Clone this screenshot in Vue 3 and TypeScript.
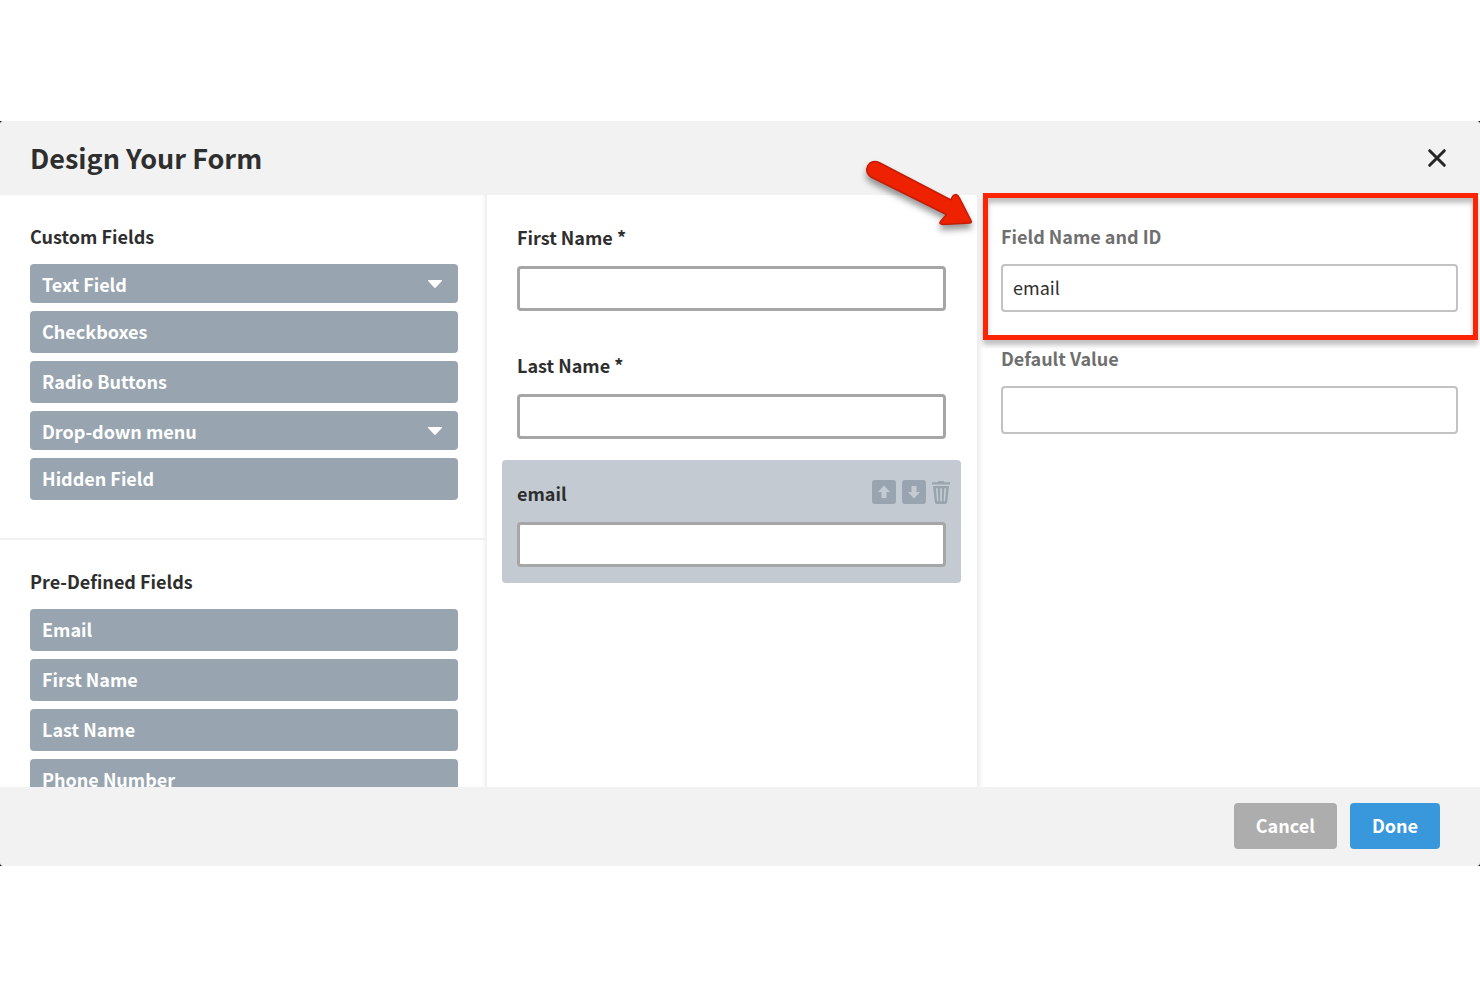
<script setup lang="ts">
import { ref } from 'vue'

interface PaletteField {
  label: string
  menu?: boolean
}

interface FormField {
  id: string
  label: string
  selected?: boolean
}

const customFields: PaletteField[] = [
  { label: 'Text Field', menu: true },
  { label: 'Checkboxes' },
  { label: 'Radio Buttons' },
  { label: 'Drop-down menu', menu: true },
  { label: 'Hidden Field' },
]

const predefinedFields: PaletteField[] = [
  { label: 'Email' },
  { label: 'First Name' },
  { label: 'Last Name' },
  { label: 'Phone Number' },
]

const formFields: FormField[] = [
  { id: 'first-name', label: 'First Name *' },
  { id: 'last-name', label: 'Last Name *' },
  { id: 'email', label: 'email', selected: true },
]

const fieldName = ref('email')
const defaultValue = ref('')
</script>

<template>
  <main class="page">
    <section class="dialog" role="dialog" aria-labelledby="dialog-title">
      <header class="dialog-header">
        <h1 id="dialog-title">Design Your Form</h1>
        <button type="button" class="close" aria-label="Close">
          <svg viewBox="0 0 20 20" width="20" height="20">
            <path d="M2.700 2.700 17.300 17.300M17.300 2.700 2.700 17.300" fill="none" stroke="#262626" stroke-width="3" stroke-linecap="round" />
          </svg>
        </button>
      </header>

      <div class="dialog-body">
        <div class="palette">
          <section class="palette-group">
            <h2>Custom Fields</h2>
            <div class="palette-list">
              <button
                v-for="field in customFields"
                :key="field.label"
                type="button"
                class="palette-item"
                :class="{ 'has-menu': field.menu }"
              >
                <span>{{ field.label }}</span>
                <svg v-if="field.menu" viewBox="0 0 16 10" width="16" height="10">
                  <path d="M1.6 1h12.8c.7 0 .9.6.5 1L8.8 8.6c-.5.5-1.100.5-1.600 0L1.100 2c-.4-.4-.2-1 .5-1z" fill="#fff" />
                </svg>
              </button>
            </div>
          </section>
          <section class="palette-group">
            <h2>Pre-Defined Fields</h2>
            <div class="palette-list">
              <button v-for="field in predefinedFields" :key="field.label" type="button" class="palette-item">
                <span>{{ field.label }}</span>
              </button>
            </div>
          </section>
        </div>

        <div class="canvas">
          <div v-for="field in formFields" :key="field.id" class="form-field" :class="{ selected: field.selected }">
            <label :for="field.id">{{ field.label }}</label>
            <input :id="field.id" type="text" />
            <div v-if="field.selected" class="actions">
              <button type="button" aria-label="Move up">
                <svg viewBox="0 0 24 24" width="24" height="24">
                  <rect width="24" height="24" rx="3" fill="#98a5b0" />
                  <path d="M12 5.500 18 12h-3.500v6h-5v-6H6z" fill="#c3cad2" />
                </svg>
              </button>
              <button type="button" aria-label="Move down">
                <svg viewBox="0 0 24 24" width="24" height="24">
                  <rect width="24" height="24" rx="3" fill="#98a5b0" />
                  <path d="M12 18.500 18 12h-3.500V6h-5v6H6z" fill="#c3cad2" />
                </svg>
              </button>
              <button type="button" aria-label="Delete">
                <svg viewBox="0 0 18 24" width="18" height="24">
                  <path d="M0 2.200h5.500L6.500 1h5l1 1.200H18v2.300H0z" fill="#98a5b0" />
                  <path
                    fill-rule="evenodd"
                    d="M1 6h16l-1.800 16.200Q15 24 13.400 24H4.600Q3 24 2.800 22.200zM4 8.200l1 13h1.300l-.6-13zM8.100 8.200v13h1.800v-13zM12.300 8.200l-.6 13H13l1-13z"
                    fill="#98a5b0"
                  />
                </svg>
              </button>
            </div>
          </div>
        </div>

        <div class="settings">
          <div class="setting">
            <label for="field-name">Field Name and ID</label>
            <input id="field-name" v-model="fieldName" type="text" />
            <div class="highlight"></div>
            <svg class="arrow" viewBox="860 154 124 84" width="124" height="84" aria-hidden="true">
              <path
                d="M879 162.500 951 200Q952.500 194.500 956 194.500 958 195 959.500 198L971 220.500Q972 222.800 970 223L943 224.400Q938.500 224.300 940.500 221.500L946.500 214.500 871 177A8 8 0 0 1 879 162.500z"
                fill="#ee2200"
                stroke="#c41c06"
                stroke-width="1.500"
                stroke-linejoin="round"
              />
            </svg>
          </div>
          <div class="setting">
            <label for="default-value">Default Value</label>
            <input id="default-value" v-model="defaultValue" type="text" />
          </div>
        </div>
      </div>

      <footer class="dialog-footer">
        <button type="button" class="cancel">Cancel</button>
        <button type="button" class="done">Done</button>
      </footer>
    </section>
  </main>
</template>

<style>
body {
  margin: 0;
  background: #fff;
}
</style>

<style scoped>
.page {
  box-sizing: border-box;
  height: 100vh;
  padding: 121px 0;
  display: flex;
  font-family: 'Noto Sans CJK SC', 'Noto Sans', sans-serif;
  font-size: 18px;
  line-height: 24px;
  color: #2e2e2e;
}

button,
input {
  box-sizing: border-box;
  font: inherit;
  color: inherit;
}

button {
  border: 0;
  padding: 0;
  background: none;
  cursor: pointer;
}

svg {
  display: block;
}

h1,
h2 {
  margin: 0;
  font-weight: 700;
}

.dialog {
  flex: 1;
  min-width: 0;
  display: flex;
  flex-direction: column;
  background: #000;
}

.dialog-header {
  display: flex;
  align-items: center;
  justify-content: space-between;
  height: 74px;
  padding: 0 33px 0 30px;
  box-sizing: border-box;
  background: #f2f2f2;
  border-radius: 3px 3px 0 0;
}

h1 {
  font-size: 27px;
  line-height: 36px;
}

.dialog-body {
  flex: 1;
  min-height: 0;
  display: grid;
  grid-template-columns: 487fr 490fr 503fr;
  grid-template-rows: minmax(0, 1fr);
  background: #fff;
}

.palette {
  overflow: hidden;
  box-shadow: inset -4px 0 4px -2px #ececec;
}

.palette-group {
  padding: 29px 29px 38px 30px;
}

.palette-group + .palette-group {
  border-top: 2px solid #f0f0f0;
}

h2 {
  margin-bottom: 16px;
  font-size: 18px;
  line-height: 24px;
}

.palette-list {
  display: flex;
  flex-direction: column;
  gap: 8px;
}

.palette-item {
  display: flex;
  align-items: center;
  justify-content: space-between;
  height: 42px;
  padding: 0 15px 2px 12px;
  border-radius: 4px;
  background: #98a5b0;
  color: #fff;
  font-weight: 700;
}

.palette-item.has-menu {
  height: 39px;
  padding-bottom: 0;
}

.canvas {
  display: flex;
  flex-direction: column;
  gap: 5px;
  padding: 9px 16px 9px 15px;
}

.form-field {
  position: relative;
  display: flex;
  flex-direction: column;
  gap: 17px;
  padding: 21px 15px 16px;
  border-radius: 4px;
  font-weight: 700;
}

.form-field.selected {
  background: #c3cad2;
}

.form-field input {
  width: 100%;
  height: 45px;
  padding: 0 12px;
  border: 3px solid #a6a6a6;
  border-radius: 4px;
  background: #fff;
  font-weight: 400;
}

.actions {
  position: absolute;
  top: 20px;
  right: 11px;
  display: flex;
  gap: 6px;
}

.settings {
  display: flex;
  flex-direction: column;
  gap: 34px;
  padding: 29px 22px 30px 24px;
  box-shadow: inset 7px 0 5px -4px #ececec;
}

.setting {
  position: relative;
  display: flex;
  flex-direction: column;
  gap: 16px;
}

.setting label {
  color: #6f6f6f;
  font-weight: 700;
}

.setting input {
  width: 100%;
  height: 48px;
  padding: 0 10px 2px;
  border: 2px solid #c2c2c2;
  border-radius: 4px;
  background: #fff;
}

.highlight {
  position: absolute;
  inset: -31px -20px -28px -18px;
  border: 5px solid #fb2504;
  box-shadow: 0 5px 5px rgba(0, 0, 0, 0.25), inset 0 5px 5px rgba(0, 0, 0, 0.25);
  pointer-events: none;
}

.arrow {
  position: absolute;
  top: -70px;
  left: -141px;
  filter: drop-shadow(0 5px 3px rgba(0, 0, 0, 0.4));
  pointer-events: none;
}

.dialog-footer {
  box-sizing: border-box;
  display: flex;
  align-items: center;
  justify-content: flex-end;
  gap: 13px;
  height: 79px;
  padding: 0 40px 2px;
  background: #f2f2f2;
  border-radius: 0 0 3px 3px;
}

.dialog-footer button {
  height: 46px;
  padding: 0 22px 2px;
  border-radius: 4px;
  color: #fff;
  font-weight: 700;
}

.dialog-footer .cancel {
  background: #adadad;
}

.dialog-footer .done {
  background: #3998dc;
}
</style>
